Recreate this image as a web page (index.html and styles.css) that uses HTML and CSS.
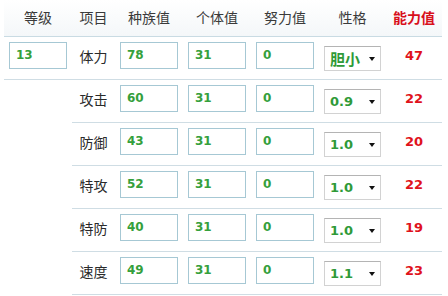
FILE: index.html
```html
<!DOCTYPE html>
<html lang="zh">
<head>
<meta charset="utf-8">
<link rel="stylesheet" href="styles.css">
</head>
<body>
<table class="calc">
  <colgroup>
    <col class="c1"><col class="c2"><col class="c3"><col class="c4"><col class="c5"><col class="c6"><col class="c7">
  </colgroup>
  <thead>
    <tr>
      <th>等级</th><th>项目</th><th>种族值</th><th>个体值</th><th>努力值</th><th>性格</th><th class="hl">能力值</th>
    </tr>
  </thead>
  <tbody>
    <tr>
      <td><div class="box">13</div></td>
      <td class="lbl">体力</td>
      <td><div class="box">78</div></td>
      <td><div class="box">31</div></td>
      <td><div class="box">0</div></td>
      <td><div class="sel cjk"><span>胆小</span><i class="arr"></i></div></td>
      <td class="res">47</td>
    </tr>
    <tr>
      <td class="blank"></td>
      <td class="lbl">攻击</td>
      <td><div class="box">60</div></td>
      <td><div class="box">31</div></td>
      <td><div class="box">0</div></td>
      <td><div class="sel"><span>0.9</span><i class="arr"></i></div></td>
      <td class="res">22</td>
    </tr>
    <tr>
      <td class="blank"></td>
      <td class="lbl">防御</td>
      <td><div class="box">43</div></td>
      <td><div class="box">31</div></td>
      <td><div class="box">0</div></td>
      <td><div class="sel"><span>1.0</span><i class="arr"></i></div></td>
      <td class="res">20</td>
    </tr>
    <tr>
      <td class="blank"></td>
      <td class="lbl">特攻</td>
      <td><div class="box">52</div></td>
      <td><div class="box">31</div></td>
      <td><div class="box">0</div></td>
      <td><div class="sel"><span>1.0</span><i class="arr"></i></div></td>
      <td class="res">22</td>
    </tr>
    <tr>
      <td class="blank"></td>
      <td class="lbl">特防</td>
      <td><div class="box">40</div></td>
      <td><div class="box">31</div></td>
      <td><div class="box">0</div></td>
      <td><div class="sel"><span>1.0</span><i class="arr"></i></div></td>
      <td class="res">19</td>
    </tr>
    <tr>
      <td class="blank"></td>
      <td class="lbl">速度</td>
      <td><div class="box">49</div></td>
      <td><div class="box">31</div></td>
      <td><div class="box">0</div></td>
      <td><div class="sel"><span>1.1</span><i class="arr"></i></div></td>
      <td class="res">23</td>
    </tr>
  </tbody>
</table>
</body>
</html>
```

FILE: styles.css
```css
html, body {
  margin: 0;
  padding: 0;
  background: #fff;
}
body {
  font-family: "Noto Sans CJK SC", "DejaVu Sans", sans-serif;
}
.calc {
  margin-left: 4px;
  width: 438px;
  border-collapse: collapse;
  table-layout: fixed;
}
.c1 { width: 68px; }
.c2 { width: 43px; }
.c3 { width: 68px; }
.c4 { width: 68px; }
.c5 { width: 68px; }
.c6 { width: 67px; }
.c7 { width: 56px; }

.calc th {
  height: 34px;
  padding: 0;
  font-weight: normal;
  font-size: 14px;
  color: #3a3a3a;
  text-align: center;
  vertical-align: middle;
  background: linear-gradient(#ffffff, #f4f7f9);
  border-bottom: 1px solid #c9dbe3;
  line-height: 16px;
  padding-bottom: 2px;
}
.calc th.hl {
  color: #d8101c;
  font-weight: bold;
}
.calc td {
  height: 37px;
  padding: 5px 0 0 0;
  vertical-align: top;
  border-bottom: 1px solid #cfdde4;
  text-align: center;
}
.calc td.blank {
  border-bottom: none;
}
.lbl {
  font-size: 14px;
  line-height: 28px;
  color: #2a2a2a;
}
.box {
  box-sizing: border-box;
  width: 58px;
  height: 27px;
  margin: 0 auto;
  border: 1px solid #a6c8d4;
  background: #fff;
  text-align: left;
  padding-left: 6px;
  font-family: "DejaVu Sans", Verdana, sans-serif;
  font-weight: bold;
  font-size: 12px;
  line-height: 25px;
  color: #35a03c;
}
.sel {
  box-sizing: border-box;
  width: 57px;
  height: 25px;
  margin: 4px auto 0;
  border: 1px solid #d2d2d2;
  border-top-color: #b4b4b4;
  background: #fff;
  display: flex;
  align-items: center;
  justify-content: space-between;
  padding: 0 5px 0 5px;
  font-family: "DejaVu Sans", Verdana, sans-serif;
  font-weight: bold;
  font-size: 13px;
  color: #2f9a38;
}
.sel.cjk {
  font-family: "Noto Sans CJK SC", sans-serif;
  font-size: 15px;
}
.sel span {
  line-height: 23px;
}
.arr {
  width: 0;
  height: 0;
  border-left: 3.5px solid transparent;
  border-right: 3.5px solid transparent;
  border-top: 4px solid #111;
  margin-top: 1px;
}
.res {
  font-family: "DejaVu Sans", Verdana, sans-serif;
  font-weight: bold;
  font-size: 13px;
  line-height: 28px;
  color: #e0121c;
}
```
